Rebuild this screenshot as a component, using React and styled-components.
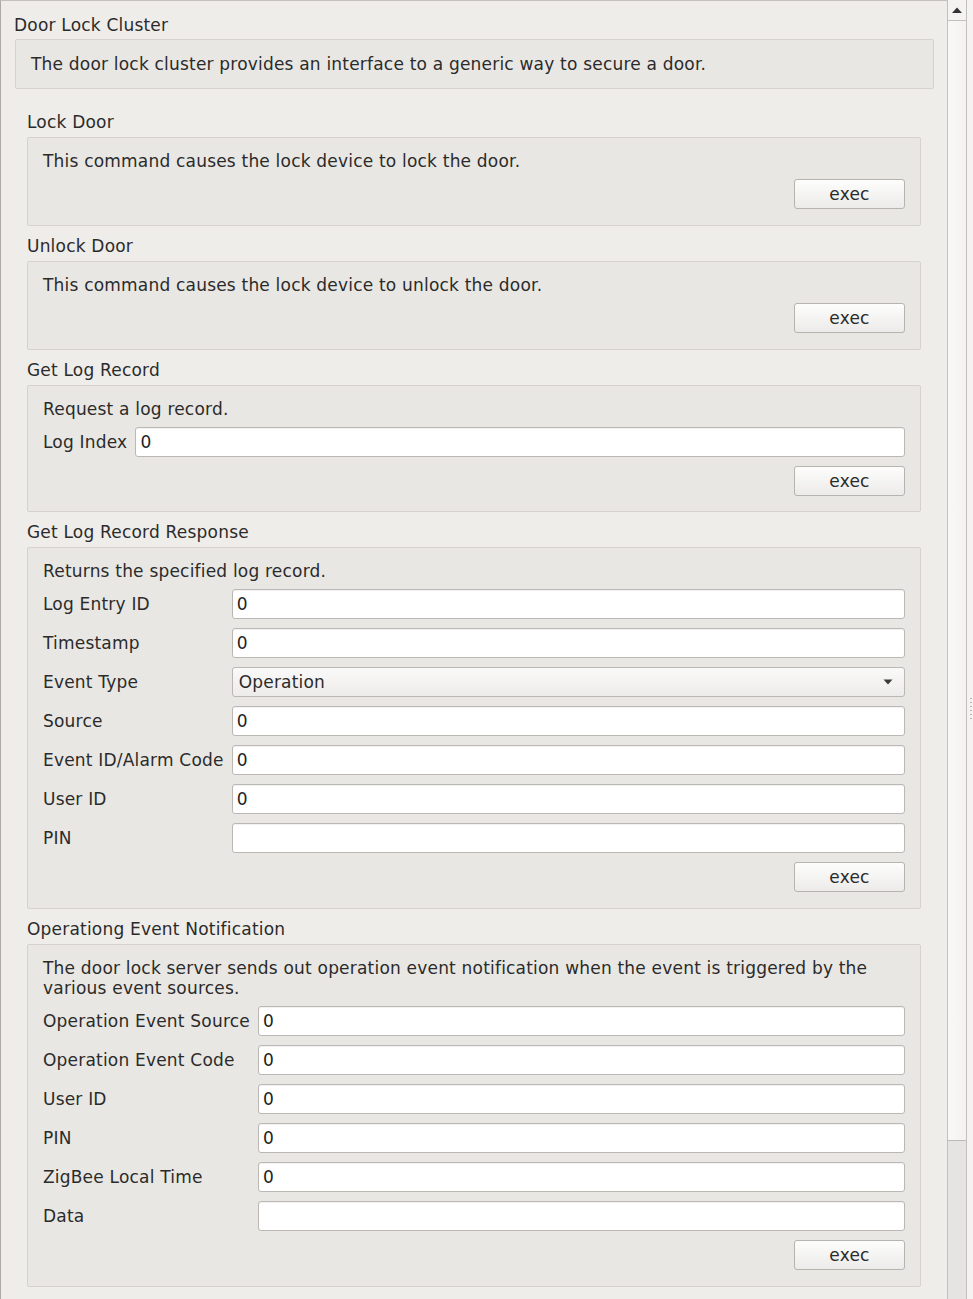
import styled, { createGlobalStyle } from 'styled-components'

const GlobalStyle = createGlobalStyle`
  html, body {
    margin: 0;
    padding: 0;
    background: #efedea;
  }
  body {
    font-family: 'DejaVu Sans', 'Noto Sans', sans-serif;
    font-size: 17px;
    letter-spacing: 0.2px;
    color: #2b2b2b;
  }
  * { box-sizing: border-box; }
`

const responseFields = [
  { label: 'Log Entry ID', value: '0' },
  { label: 'Timestamp', value: '0' },
  { label: 'Event Type', value: 'Operation', combo: true },
  { label: 'Source', value: '0' },
  { label: 'Event ID/Alarm Code', value: '0' },
  { label: 'User ID', value: '0' },
  { label: 'PIN', value: '' },
]

const notificationFields = [
  { label: 'Operation Event Source', value: '0' },
  { label: 'Operation Event Code', value: '0' },
  { label: 'User ID', value: '0' },
  { label: 'PIN', value: '0' },
  { label: 'ZigBee Local Time', value: '0' },
  { label: 'Data', value: '' },
]

function Field({ label, value, combo }) {
  return (
    <>
      <Label>{label}</Label>
      {combo ? (
        <Combo>
          <span>{value}</span>
          <svg width='10' height='6' viewBox='0 0 10 6'>
            <path d='M0.5 0.5 L9.5 0.5 L5 5.5 Z' fill='#3a3a3a' />
          </svg>
        </Combo>
      ) : (
        <Input defaultValue={value} />
      )}
    </>
  )
}

function Section({ title, text, fields, tight }) {
  return (
    <SectionWrap>
      <Title>{title}</Title>
      <Box $tight={tight}>
        <Desc>{text}</Desc>
        {fields && (
          <Form>
            {fields.map((f, i) => (
              <Field key={i} {...f} />
            ))}
          </Form>
        )}
        <Footer>
          <ExecButton>exec</ExecButton>
        </Footer>
      </Box>
    </SectionWrap>
  )
}

export default function App() {
  return (
    <Window>
      <GlobalStyle />
      <Viewport>
        <ClusterTitle>Door Lock Cluster</ClusterTitle>
        <ClusterBox>
          <Desc>The door lock cluster provides an interface to a generic way to secure a door.</Desc>
        </ClusterBox>

        <Sections>
          <Section title='Lock Door' text='This command causes the lock device to lock the door.' />
          <Section title='Unlock Door' text='This command causes the lock device to unlock the door.' />
          <Section
            title='Get Log Record'
            text='Request a log record.'
            fields={[{ label: 'Log Index', value: '0' }]}
            tight
          />
          <Section
            title='Get Log Record Response'
            text='Returns the specified log record.'
            fields={responseFields}
          />
          <Section
            title='Operationg Event Notification'
            text='The door lock server sends out operation event notification when the event is triggered by the various event sources.'
            fields={notificationFields}
          />
        </Sections>
      </Viewport>

      {/* vertical scroll bar */}
      <ScrollBar>
        <ArrowButton>
          <svg width='10' height='6' viewBox='0 0 10 6'>
            <path d='M0 6 L5 0.5 L10 6 Z' fill='#333' />
          </svg>
        </ArrowButton>
        <Thumb />
        <Track />
      </ScrollBar>

      <SideStrip>
        <Grip>
          {[0, 1, 2, 3, 4, 5].map((i) => (
            <span key={i} />
          ))}
        </Grip>
      </SideStrip>
    </Window>
  )
}

const Window = styled.div`
  display: flex;
  width: 973px;
  height: 1299px;
  overflow: hidden;
`

const Viewport = styled.div`
  flex: 0 0 947px;
  border-left: 1px solid #aeaba7;
  border-top: 1px solid #c4c1bd;
  padding: 14px 13px 0 13px;
  overflow: hidden;
`

const ClusterTitle = styled.div`
  line-height: 20px;
`

const ClusterBox = styled.div`
  margin: 4px 0 0 1px;
  padding: 14px 15px 15px;
  border: 1px solid #d6d3cf;
  border-radius: 2px;
  background: #e9e7e3;
`

const Sections = styled.div`
  display: flex;
  flex-direction: column;
  gap: 10px;
  margin: 23px 13px 0 13px;
`

const SectionWrap = styled.div`
  display: flex;
  flex-direction: column;
  gap: 5px;
`

const Title = styled.div`
  line-height: 20px;
`

const Box = styled.div`
  display: flex;
  flex-direction: column;
  gap: 9px;
  padding: 13px 15px ${(p) => (p.$tight ? '15px' : '16px')};
  border: 1px solid #d6d3cf;
  border-radius: 2px;
  background: #e9e7e3;
`

const Desc = styled.div`
  line-height: 20px;
  margin-bottom: -1px;
`

const Form = styled.div`
  display: grid;
  grid-template-columns: max-content 1fr;
  column-gap: 8px;
  row-gap: 9px;
  align-items: center;
`

const Label = styled.div`
  line-height: 20px;
  white-space: nowrap;
`

const Input = styled.input`
  height: 30px;
  width: 100%;
  padding: 0 4px;
  font: inherit;
  letter-spacing: inherit;
  color: #1e1e1e;
  background: #fff;
  border: 1px solid #bbb8b3;
  border-radius: 3px;
  box-shadow: inset 0 1px 1px rgba(0, 0, 0, 0.06);
  outline: none;
`

const Combo = styled.div`
  height: 30px;
  display: flex;
  align-items: center;
  justify-content: space-between;
  padding: 0 11px 0 6px;
  background: linear-gradient(#fbfafa, #edecea);
  border: 1px solid #bbb8b3;
  border-radius: 3px;
`

const Footer = styled.div`
  display: flex;
  justify-content: flex-end;
`

const ExecButton = styled.button`
  width: 111px;
  height: 30px;
  font: inherit;
  letter-spacing: inherit;
  color: #2b2b2b;
  background: linear-gradient(#fdfdfc, #ecebe9);
  border: 1px solid #b7b4af;
  border-radius: 3px;
  padding: 0;
`

const ScrollBar = styled.div`
  flex: 0 0 20px;
  display: flex;
  flex-direction: column;
  border-left: 1px solid #c3c0bc;
  border-right: 1px solid #c3c0bc;
  background: #e5e3e1;
`

const ArrowButton = styled.div`
  height: 21px;
  display: flex;
  align-items: center;
  justify-content: center;
  background: #f4f3f2;
  border-bottom: 1px solid #c3c0bc;
`

const Thumb = styled.div`
  height: 1120px;
  background: linear-gradient(90deg, #f9f8f7, #f3f2f0);
  border-bottom: 1px solid #bdbab6;
`

const Track = styled.div`
  flex: 1;
  background: #e6e4e2;
`

const SideStrip = styled.div`
  flex: 1;
  display: flex;
  align-items: center;
  justify-content: flex-end;
  background: #f4f3f1;
  padding-right: 1px;
  padding-top: 117px;
`

const Grip = styled.div`
  display: flex;
  flex-direction: column;
  gap: 3px;

  span {
    width: 2px;
    height: 1px;
    background: #b8b5b1;
  }
`
